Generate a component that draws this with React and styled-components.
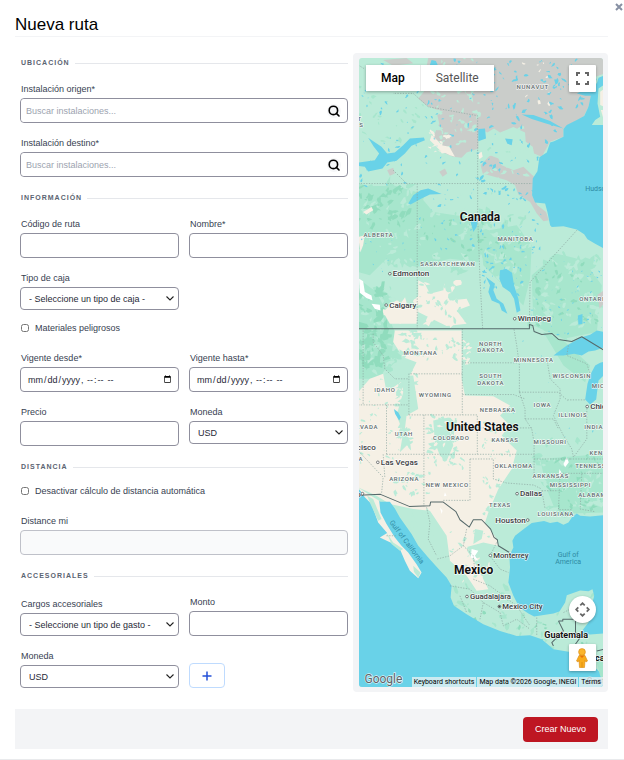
import { useState } from "react";
import styled, { createGlobalStyle } from "styled-components";

// small seeded blobs, so the terrain looks the same on every render
const scatter = (seed, count, [x, y, w, h], size) => {
  let s = seed;
  const rand = () => {
    s = (s * 16807) % 2147483647;
    return s / 2147483647;
  };
  let d = "";
  for (let i = 0; i < count; i++) {
    const cx = x + rand() * w;
    const cy = y + rand() * h;
    const r = size * (0.3 + rand() * 0.9);
    const tilt = rand() * Math.PI;
    for (let k = 0; k < 8; k++) {
      const a = (k * Math.PI) / 4;
      const q = r * (0.4 + rand());
      const px = Math.cos(a) * q;
      const py = Math.sin(a) * q * 0.5;
      const rx = cx + px * Math.cos(tilt) - py * Math.sin(tilt);
      const ry = cy + px * Math.sin(tilt) + py * Math.cos(tilt);
      d += `${k ? "L" : "M"}${rx.toFixed(1)} ${ry.toFixed(1)}`;
    }
    d += "Z";
  }
  return d;
};

const forest = [
  "M25 425L130 420L200 440L250 500L380 520L400 600L385 650L300 640L200 665L110 640L60 690L25 680Z",
  "M390 560L500 540L545 600L540 700L520 780L440 700L400 660Z",
  "M545 690L620 625L700 645L755 720L740 860L700 868L640 880L550 840Z",
  "M25 700L80 740L110 800L135 860L120 960L80 1000L25 1000Z",
  "M580 860L640 885L720 960L705 1010L640 960Z",
  "M570 1240L761 1225V1400L620 1405L590 1330Z",
  scatter(11, 60, [25, 410, 180, 250], 20),
  scatter(12, 50, [200, 500, 330, 180], 20),
  scatter(14, 50, [540, 620, 220, 260], 20),
  scatter(15, 50, [30, 720, 110, 280], 20),
  scatter(17, 30, [560, 1180, 200, 230], 17),
  scatter(18, 20, [380, 40, 160, 560], 8),
  scatter(20, 60, [310, 1600, 440, 230], 14),
  scatter(39, 30, [30, 100, 200, 200], 9),
].join("");

const clearings = [
  scatter(81, 60, [25, 430, 360, 220], 13),
  scatter(82, 40, [400, 560, 140, 180], 12),
  scatter(83, 50, [550, 650, 200, 200], 13),
  scatter(84, 30, [40, 740, 90, 240], 12),
  scatter(85, 30, [580, 1230, 180, 160], 13),
].join("");

const deepForest = [
  scatter(21, 40, [25, 420, 150, 140], 13),
  scatter(22, 60, [25, 720, 85, 240], 17),
  scatter(23, 30, [220, 520, 300, 140], 8),
  scatter(24, 30, [590, 1220, 170, 170], 9),
  scatter(25, 30, [560, 650, 180, 190], 9),
  scatter(26, 26, [320, 1640, 420, 160], 8),
].join("");

const lakes = [
  scatter(31, 90, [25, 45, 360, 380], 6),
  scatter(32, 90, [380, 45, 250, 420], 8),
  scatter(33, 36, [600, 45, 150, 150], 8),
  scatter(34, 60, [210, 430, 370, 190], 6),
  scatter(35, 40, [400, 600, 150, 150], 6),
  scatter(36, 50, [545, 640, 215, 230], 4),
  scatter(37, 20, [25, 560, 180, 120], 3),
  scatter(38, 12, [480, 880, 250, 300], 3),
].join("");

const cream = [
  scatter(41, 26, [215, 710, 110, 130], 18),
  scatter(42, 14, [110, 765, 90, 70], 17),
  scatter(43, 12, [330, 880, 30, 90], 10),
  scatter(44, 14, [240, 260, 60, 60], 9),
  scatter(45, 12, [340, 1440, 100, 180], 14),
  scatter(46, 12, [520, 50, 80, 130], 6),
].join("");

const rangeland = [
  scatter(50, 30, [205, 715, 150, 120], 10),
  scatter(51, 38, [140, 850, 60, 170], 13),
  scatter(52, 34, [145, 990, 45, 220], 13),
  scatter(53, 38, [235, 1110, 85, 130], 13),
  scatter(54, 26, [200, 870, 130, 70], 8),
  scatter(55, 32, [30, 1000, 120, 260], 6),
  scatter(56, 26, [130, 1270, 110, 80], 9),
  scatter(57, 34, [185, 1395, 60, 120], 15),
  scatter(58, 24, [400, 1130, 80, 110], 7),
  scatter(59, 20, [400, 1290, 50, 150], 8),
  scatter(60, 24, [300, 1450, 120, 170], 8),
  scatter(61, 14, [240, 1220, 100, 50], 8),
].join("");

// x, y, anchor, lines
const regions = [
  [41, 576, "start", ["ALBERTA"]],
  [548, 132, "middle", ["NUNAVUT"]],
  [496, 587, "middle", ["MANITOBA"]],
  [294, 661, "middle", ["SASKATCHEWAN"]],
  [687, 767, "start", ["ONTARIO"]],
  [212, 928, "middle", ["MONTANA"]],
  [422, 902, "middle", ["NORTH", "DAKOTA"]],
  [551, 951, "middle", ["MINNESOTA"]],
  [422, 998, "middle", ["SOUTH", "DAKOTA"]],
  [665, 999, "middle", ["WISCONSIN"]],
  [105, 1038, "middle", ["IDAHO"]],
  [256, 1053, "middle", ["WYOMING"]],
  [443, 1099, "middle", ["NEBRASKA"]],
  [577, 1084, "middle", ["IOWA"]],
  [668, 1113, "middle", ["ILLINOIS"]],
  [725, 1028, "start", ["MICHIGAN"]],
  [85, 1150, "end", ["NEVADA"]],
  [162, 1171, "middle", ["UTAH"]],
  [304, 1183, "middle", ["COLORADO"]],
  [465, 1188, "middle", ["KANSAS"]],
  [600, 1194, "middle", ["MISSOURI"]],
  [702, 1149, "start", ["INDIANA"]],
  [718, 1227, "start", ["KENTUCKY"]],
  [491, 1268, "middle", ["OKLAHOMA"]],
  [675, 1267, "start", ["TENNESSEE"]],
  [602, 1296, "middle", ["ARKANSAS"]],
  [163, 1307, "middle", ["ARIZONA"]],
  [292, 1324, "middle", ["NEW MEXICO"]],
  [661, 1325, "middle", ["MISSISSIPPI"]],
  [450, 1383, "middle", ["TEXAS"]],
  [684, 1355, "start", ["ALABAMA"]],
  [617, 1412, "middle", ["LOUISIANA"]],
  [36, 228, "end", ["T"]],
  [41, 247, "end", ["S"]],
  [40, 1246, "end", ["A"]],
];

const cities = [
  [120, 685, "Edmonton"],
  [109, 779, "Calgary"],
  [494, 820, "Winnipeg"],
  [711, 1083, "Chicago"],
  [84, 1250, "Las Vegas"],
  [501, 1344, "Dallas"],
  [421, 1529, "Monterrey", 23],
  [351, 1652, "Guadalajara", 23],
  [448, 1682, "Mexico City", 23],
];

const RouteMap = () => (
  <MapSvg viewBox="25 39 736 1884" preserveAspectRatio="xMidYMid slice" aria-hidden="true">
    <rect x="0" y="0" width="800" height="2000" fill="#bbebd8" />
    <path d={forest} fill="#a7e6cd" />
    <path d={clearings} fill="#bbebd8" />
    <path d={deepForest} fill="#90dcbd" />
    <path
      fill="#cacdca"
      d="M235 39H761V86L735 96L722 125L724 150L715 185L700 215L640 250V275L600 290L575 335L552 325L548 305L527 290L525 262L490 246L450 262L432 250L412 262L398 255L385 270V310L350 322L335 338L310 335L270 318L280 290L245 285L268 235L262 210L280 200L235 185L205 160L222 140L228 75ZM392 360L420 330L445 340L455 360L490 375L520 365L552 395L546 450L562 480L588 500L596 525L580 528L560 505L540 470L505 448L495 420L470 405L398 385ZM112 375L130 368L135 385L120 392ZM268 380L285 370L292 385L278 395ZM100 45L170 39L190 55L130 62ZM742 748L761 735V775L748 790Z"
    />
    <path d={scatter(71, 40, [240, 130, 145, 180], 12)} fill="#bbebd8" />
    <path d={scatter(73, 20, [250, 39, 180, 90], 12)} fill="#bbebd8" />
    <path d={scatter(72, 24, [390, 240, 150, 160], 10)} fill="#bbebd8" />
    <path
      fill="#f5f0e5"
      d="M205 705L225 715L240 745L280 735L300 765L350 760L360 780L320 795L350 835L290 842L205 800ZM100 800L130 770L205 790L200 835L120 835ZM135 855H335V1000L345 1050L430 1052L480 1080L450 1110L480 1140L455 1170L500 1215L485 1270L445 1330L415 1400L405 1430L440 1480L445 1500L400 1490L345 1505L380 1560L400 1600L415 1630L380 1635L350 1590L300 1545L290 1470L240 1395L190 1390L120 1375L80 1350L25 1325V1040L60 1000L100 985L110 1040L180 990L200 950L160 935L130 890ZM245 270L262 285L275 300L298 305L315 335L300 330L270 315L240 285ZM25 575L45 570L40 600L32 620ZM40 500L65 485L70 495L50 508ZM385 325L395 320L398 335L388 342Z"
    />
    <path d={cream} fill="#f5f0e5" />
    <path d={rangeland} fill="#bbebd8" />
    <path
      fill="#bbebd8"
      d="M155 990L190 990L205 1090L170 1110L165 1150L180 1190L150 1220L160 1160L140 1110L160 1040ZM250 1125L300 1115L318 1135L300 1160L310 1200L290 1245L270 1230L255 1190ZM185 1395L215 1400L235 1440L270 1500L300 1580L290 1590L235 1520ZM375 1450L400 1455L395 1480L370 1495Z"
    />
    <path d={scatter(62, 16, [240, 1110, 90, 130], 8)} fill="#f5f0e5" />
    <path
      fill="#ffffff"
      d="M28 700L40 708L45 740L65 750L68 765L50 758L30 742ZM65 775L90 778L92 795L75 790ZM365 1510L385 1515L375 1530L385 1545L362 1535ZM270 1385L278 1395L275 1405ZM650 1235L656 1250L645 1265L640 1255ZM628 1270L636 1285L625 1300ZM285 1340L290 1350L282 1352Z"
    />
    <path d={lakes} fill="#69d2e8" />

    <g fill="#69d2e8">
      {/* Hudson Bay */}
      <path d="M765 90L745 98L740 115L680 145L705 152L722 152L715 185L702 213L680 225L650 240L640 252V275L612 288L600 292L590 322L568 336L562 378L548 400L546 450L555 472L585 475L592 500L600 540L605 545L640 543L680 553L702 567L712 582L735 595L765 612Z" />
      {/* Great Slave, Athabasca and Winnipeg */}
      <path d="M55 278L95 305L112 325L135 322L160 300L180 280L222 277L225 285L185 302L165 325L140 347L112 352L98 370L55 379L45 365L25 362V352L75 345L88 325L72 305ZM175 475L190 450L212 435L235 430L275 446L240 448L215 460L182 478ZM450 675L468 670L486 682L492 720L505 760L511 795L500 802L492 760L480 740L458 725L448 700ZM408 695L435 715L430 735L440 760L460 775L472 805L455 795L448 775L425 765L415 740L420 720ZM515 208L550 210L600 228L640 250L590 236L545 222ZM385 252L405 250L408 280L385 288ZM465 280L488 282L485 300L472 296ZM245 45L258 48L270 75L262 85L240 60ZM683 810L697 806V835L685 838ZM362 530L385 515L380 545L370 560ZM132 1090L145 1100L153 1115L148 1125L136 1105Z" />
      {/* Superior and Michigan */}
      <path d="M610 930L650 900L692 876L720 868L740 855L765 860V905L735 915L715 918L695 930L672 925L640 930ZM705 1062L712 1015L722 985L735 960L750 952L765 948V985L745 1005L738 1062L720 1077Z" />
      {/* Gulf of Mexico and the Caribbean */}
      <path d="M765 1408L720 1412L690 1410L680 1403L665 1415L655 1430L640 1437L622 1428L600 1432L582 1426L545 1432L525 1447L495 1470L487 1485L490 1505L478 1530L480 1565L475 1610L490 1650L508 1685L535 1703L552 1712L610 1703L628 1697L645 1670L650 1648L690 1634L715 1636L727 1630L732 1650L722 1690L715 1730L690 1762L720 1766L765 1762Z" />
      {/* Pacific */}
      <path d="M20 1325L45 1345L92 1368L120 1368L135 1388L150 1415L185 1465L205 1500L235 1535L262 1565L290 1595L305 1620L302 1655L312 1680L350 1705L400 1735L450 1755L500 1770L540 1768L575 1780L610 1810L660 1818L700 1840L740 1870L765 1895V1960H20Z" />
    </g>
    {/* Baja California */}
    <path
      fill="#f5f0e5"
      d="M25 1325L55 1345L88 1365L92 1400L110 1435L135 1475L155 1500L175 1520L200 1555L215 1580L205 1597L180 1575L165 1545L150 1510L125 1492L90 1475L112 1462L85 1430L65 1375L45 1355Z"
    />
    <path fill="#bbebd8" d="M52 1350L70 1360L95 1420L85 1425L62 1375ZM110 1460L130 1490L160 1510L150 1515L125 1495ZM190 1560L212 1580L205 1595L192 1578ZM745 130L761 120V240L725 240L735 225L750 215L742 175Z" />
    <path fill="#f5f0e5" d="M750 140L761 132V185L750 180ZM752 195H761V225Z" />
    <path d="M740 1848L761 1835V1905L750 1890Z" fill="#a5e5cb" />

    <g fill="none" stroke="#8ba59f" strokeWidth="2" strokeDasharray="4 4">
      <path d="M25 415H546M202 415V850M383 510V212L235 185L190 145H130M383 510L390 700L398 850M680 555L540 710L538 840M25 60L45 72M130 375L175 420" />
      <path d="M337 850V1108M337 952H505M492 852L500 900L508 960V1040M337 1047H490L525 1060M177 1108V985H337M177 1108H382V1226M222 1108V1382M110 1078V1226M110 1226H552M25 1078H177M40 855V1078M70 865V890L100 930L105 970L135 1000L177 1000M382 1147H545M360 1240V1364H280M360 1240H430V1300L470 1312L550 1318L575 1330M508 1040H625L652 1065M508 1040L525 1090V1120L545 1150L552 1190V1300M525 1120H610L625 1150M592 950L600 1000L630 1030V1060L610 1110L640 1170L665 1210L670 1235M552 1240H660M655 900L650 930L710 955L720 985M652 1063H705M710 1080V1180L670 1235M660 1240H761M630 1283H761M630 1283L625 1392H665M575 1335H625M575 1335L585 1390M695 1285L690 1390L735 1398M25 1215L100 1295L95 1345M100 1226L105 1295" />
      <path d="M230 1385L240 1430L235 1480L260 1530M350 1450L340 1500L300 1530L260 1540M340 1500L370 1530L375 1580M440 1490L420 1530L450 1570L475 1580M300 1620L360 1630L400 1670L450 1700M370 1600L420 1620L460 1650L500 1680M330 1650L350 1700M400 1670L390 1720M450 1700L460 1740L500 1720L540 1750M500 1680L540 1740M110 1470H140M640 1700L680 1680M560 1715L560 1770" />
    </g>
    <g fill="none" stroke="#56696a" strokeWidth="3" strokeLinejoin="round">
      <path d="M25 850H538V837L548 840L552 858L575 867L605 864L625 882L665 888L695 874L761 914" />
      <path d="M25 1349L92 1346L178 1382L240 1380L242 1369H280L318 1398L330 1422L358 1444L370 1422H395L422 1450L432 1475L442 1482L445 1500L478 1520" />
      <path d="M625 1725H638V1720H676V1760M625 1725L640 1755L605 1790L610 1800M676 1760L690 1775L672 1800L690 1815M740 1815L761 1810" />
    </g>

    {regions.map(([x, y, anchor, lines]) => (
      <RegionName key={lines[0]} textAnchor={anchor}>
        {lines.map((line, i) => (
          <tspan key={line} x={x} y={y + i * 19}>
            {line}
          </tspan>
        ))}
      </RegionName>
    ))}
    {cities.map(([x, y, name, size = 24]) => (
      <g key={name}>
        <circle cx={x} cy={y} r="4" fill="#fff" stroke="#3c4043" strokeWidth="2" />
        <CityName x={x + 9} y={y + 8} fontSize={size}>
          {name}
        </CityName>
      </g>
    ))}
    <circle cx="448" cy="1682" r="3" fill="#3c4043" />
    <circle cx="533" cy="1423" r="4" fill="#fff" stroke="#3c4043" strokeWidth="2" />
    <CityName x="527" y="1432" fontSize="24" textAnchor="end">
      Houston
    </CityName>
    <circle cx="38" cy="1344" r="4" fill="#fff" stroke="#3c4043" strokeWidth="2" />
    <CityName x="33" y="1353" fontSize="24" textAnchor="end">
      San Diego
    </CityName>
    <CityName x="78" y="1212" fontSize="24" textAnchor="end">
      San Francisco
    </CityName>
    <CountryName x="390" y="527">Canada</CountryName>
    <CountryName x="397" y="1157">United States</CountryName>
    <CountryName x="371" y="1584">Mexico</CountryName>
    <CountryName x="648" y="1775" $small>
      Guatemala
    </CountryName>
    <CountryName x="770" y="1846" $small>
      Nicaragua
    </CountryName>
    <CountryName x="774" y="1914" $small $faded>
      Costa Rica
    </CountryName>
    <WaterName x="705" y="437">Hudson Bay</WaterName>
    <WaterName textAnchor="middle">
      <tspan x="654" y="1535">Gulf of</tspan>
      <tspan x="654" y="1555">America</tspan>
    </WaterName>
    <WaterName transform="translate(118 1430) rotate(53)">Gulf of California</WaterName>
    <GoogleMark x="44" y="1910">Google</GoogleMark>
  </MapSvg>
);

const Field = ({ id, label, children }) => (
  <FieldBox>
    <Label htmlFor={id}>{label}</Label>
    {children}
  </FieldBox>
);

const App = () => {
  const [mapType, setMapType] = useState("map");

  return (
    <Modal>
      <GlobalStyle />
      <CloseButton type="button" aria-label="Cerrar">
        <svg width="8" height="8" viewBox="0 0 8 8" stroke="#8790a3" strokeWidth="2">
          <path d="M1 1L7 7M7 1L1 7" />
        </svg>
      </CloseButton>
      <Title>Nueva ruta</Title>

      <Content>
        <Form id="route-form" onSubmit={(e) => e.preventDefault()}>
          <SectionTitle>Ubicación</SectionTitle>
          {[
            ["origin", "Instalación origen*"],
            ["destination", "Instalación destino*"],
          ].map(([id, label]) => (
            <Field key={id} id={id} label={label}>
              <SearchBox>
                <SearchInput id={id} placeholder="Buscar instalaciones..." />
                <SearchButton type="button" aria-label="Buscar">
                  <svg width="12" height="12" viewBox="0 0 12 12" fill="none" stroke="#000" strokeWidth="1.6">
                    <circle cx="5.4" cy="5.4" r="4.2" />
                    <path d="M8.4 8.4L11 11" strokeLinecap="round" />
                  </svg>
                </SearchButton>
              </SearchBox>
            </Field>
          ))}

          <SectionTitle>Información</SectionTitle>
          <Row>
            <Field id="code" label="Código de ruta">
              <Input id="code" />
            </Field>
            <Field id="name" label="Nombre*">
              <Input id="name" />
            </Field>
          </Row>
          <Row>
            <Field id="box-type" label="Tipo de caja">
              <Select id="box-type">
                <option>- Seleccione un tipo de caja -</option>
              </Select>
            </Field>
          </Row>
          <CheckLabel>
            <Checkbox type="checkbox" />
            Materiales peligrosos
          </CheckLabel>
          <Row>
            <Field id="valid-from" label="Vigente desde*">
              <Input id="valid-from" type="datetime-local" />
            </Field>
            <Field id="valid-to" label="Vigente hasta*">
              <Input id="valid-to" type="datetime-local" />
            </Field>
          </Row>
          <Row>
            <Field id="price" label="Precio">
              <Input id="price" />
            </Field>
            <Field id="currency" label="Moneda">
              <Select id="currency">
                <option>USD</option>
                <option>MXN</option>
              </Select>
            </Field>
          </Row>

          <SectionTitle>Distancia</SectionTitle>
          <CheckLabel>
            <Checkbox type="checkbox" />
            Desactivar cálculo de distancia automática
          </CheckLabel>
          <Field id="distance" label="Distance mi">
            <Input id="distance" disabled />
          </Field>

          <SectionTitle>Accesoriales</SectionTitle>
          <Row $align="end">
            <Field id="charge" label="Cargos accesoriales">
              <Select id="charge">
                <option>- Seleccione un tipo de gasto -</option>
              </Select>
            </Field>
            <Field id="amount" label="Monto">
              <Input id="amount" />
            </Field>
          </Row>
          <Row $align="end">
            <Field id="charge-currency" label="Moneda">
              <Select id="charge-currency">
                <option>USD</option>
                <option>MXN</option>
              </Select>
            </Field>
            <AddButton type="button" aria-label="Agregar cargo">
              <svg width="10" height="10" viewBox="0 0 10 10" stroke="#2450d8" strokeWidth="1.5">
                <path d="M5 0.5V9.5M0.5 5H9.5" />
              </svg>
            </AddButton>
          </Row>
        </Form>

        <MapPanel>
          <MapCanvas>
            <RouteMap />
            <MapTypes>
              <MapType type="button" $active={mapType === "map"} onClick={() => setMapType("map")}>
                Map
              </MapType>
              <MapType
                type="button"
                $active={mapType === "satellite"}
                onClick={() => setMapType("satellite")}
              >
                Satellite
              </MapType>
            </MapTypes>
            <FullscreenButton type="button" aria-label="Toggle fullscreen view">
              <svg width="13" height="13" viewBox="0 0 13 13" fill="none" stroke="#666" strokeWidth="2">
                <path d="M1 4V1H4M9 1H12V4M12 9V12H9M4 12H1V9" />
              </svg>
            </FullscreenButton>
            <MapTools>
              <MapButton type="button" aria-label="Map camera controls" $round>
                <svg width="15" height="15" viewBox="0 0 15 15" fill="none" stroke="#666" strokeWidth="1.8">
                  <path d="M5.3 3.3L7.5 1.2L9.7 3.3M5.3 11.7L7.5 13.8L9.7 11.7M3.3 5.3L1.2 7.5L3.3 9.7M11.7 5.3L13.8 7.5L11.7 9.7" />
                </svg>
              </MapButton>
              <MapButton type="button" aria-label="Street View Pegman">
                <svg width="12" height="20" viewBox="0 0 12 20">
                  <path
                    d="M3 7.5H9L11.5 13L10 14L9 12.5L8.5 19.5H3.5L3 12.5L2 14L0.5 13Z"
                    fill="#f9ab1c"
                    stroke="#d98a12"
                    strokeWidth="0.6"
                  />
                  <path d="M6 14V19.5" stroke="#d98a12" strokeWidth="0.8" />
                  <path d="M3.5 7.5H8.5L6 10Z" fill="#e8710a" />
                  <circle cx="6" cy="4" r="3.4" fill="#fbb52d" stroke="#d98a12" strokeWidth="0.6" />
                </svg>
              </MapButton>
            </MapTools>
            <Attribution>
              <AttributionButton type="button">Keyboard shortcuts</AttributionButton>
              <AttributionText>Map data ©2026 Google, INEGI</AttributionText>
              <AttributionLink href="#terms">Terms</AttributionLink>
            </Attribution>
          </MapCanvas>
        </MapPanel>
      </Content>

      <Footer>
        <SubmitButton type="submit" form="route-form">
          Crear Nuevo
        </SubmitButton>
      </Footer>
    </Modal>
  );
};

export default App;

const GlobalStyle = createGlobalStyle`
  * {
    box-sizing: border-box;
  }

  body {
    margin: 0;
    background-color: #ffffff;
    font-family: "Liberation Sans", Arial, sans-serif;
    font-size: 9px;
    color: #374151;
  }

  button, input, select {
    margin: 0;
    font-family: inherit;
    font-size: 9px;
  }

  button {
    padding: 0;
    cursor: pointer;
  }
`;

const Modal = styled.main`
  position: relative;
  padding: 15px 16px 10px 15px;
  border-bottom: 1px solid #e9eaec;
`;

const CloseButton = styled.button`
  position: absolute;
  top: 3px;
  right: 1px;
  display: flex;
  border: 0;
  background: none;
`;

const Title = styled.h1`
  margin: 0 0 16px;
  padding-bottom: 1px;
  border-bottom: 1px solid #f3f4f6;
  font-size: 17px;
  line-height: 20px;
  font-weight: 400;
  color: #000000;
`;

const Content = styled.div`
  display: grid;
  grid-template-columns: 57fr 43fr;
`;

const Form = styled.form`
  display: flex;
  flex-direction: column;
  gap: 15px;
  min-width: 0;
  padding: 4px 5px;
`;

const SectionTitle = styled.h2`
  display: flex;
  align-items: center;
  gap: 5px;
  margin: 0;
  padding-left: 1px;
  font-size: 7px;
  line-height: 12px;
  letter-spacing: 1px;
  text-transform: uppercase;
  color: #5b6472;

  &::after {
    content: "";
    flex: 1;
    height: 1px;
    background-color: #e5e7eb;
  }
`;

const Row = styled.div`
  display: grid;
  grid-template-columns: 1fr 1fr;
  column-gap: 10px;
  align-items: ${({ $align }) => $align || "start"};
`;

const FieldBox = styled.div`
  display: flex;
  flex-direction: column;
  gap: 4px;
  min-width: 0;
`;

const Label = styled.label`
  padding-left: 1px;
  line-height: 10px;
`;

const Input = styled.input`
  width: 100%;
  height: 25px;
  padding: 0 6px;
  border: 1px solid #8f8f9d;
  border-radius: 4px;
  background-color: #ffffff;
  color: #1f2937;

  &::placeholder {
    color: #9ca3af;
  }

  &::-webkit-calendar-picker-indicator {
    width: 9px;
    height: 9px;
    padding: 0;
  }

  &:disabled {
    border-color: #bfc1c9;
    background-color: #f9fafb;
  }
`;

const SearchBox = styled.div`
  display: flex;
  align-items: center;
  height: 25px;
  padding-right: 6px;
  border: 1px solid #8f8f9d;
  border-radius: 4px;
`;

const SearchInput = styled(Input)`
  flex: 1;
  height: 100%;
  padding: 0 5px;
  border: 0;
`;

const SearchButton = styled.button`
  display: flex;
  padding: 1px;
  border: 0;
  border-radius: 50%;
  background-color: #f6f7f9;
`;

const Select = styled.select`
  appearance: none;
  width: 100%;
  height: 23px;
  padding: 0 20px 0 8px;
  border: 1px solid #8f8f9d;
  border-radius: 4px;
  background: #ffffff
    url("data:image/svg+xml,%3Csvg xmlns='http://www.w3.org/2000/svg' width='8' height='5' fill='none' stroke='%23222' stroke-width='1.1'%3E%3Cpath d='M0.5 0.5L4 4L7.5 0.5'/%3E%3C/svg%3E")
    no-repeat right 4px center;
  color: #1f2937;
`;

const CheckLabel = styled.label`
  display: flex;
  align-items: center;
  gap: 6px;
  margin-top: -3px;
  padding: 0 0 4px 1px;
  line-height: 12px;
`;

const Checkbox = styled.input`
  width: 8px;
  height: 8px;
  margin: 0;
`;

const AddButton = styled.button`
  display: flex;
  align-items: center;
  justify-content: center;
  width: 36px;
  height: 25px;
  border: 1px solid #bfdbfe;
  border-radius: 4px;
  background-color: #ffffff;
`;

const MapPanel = styled.section`
  display: flex;
  padding: 5px 5px 5px 6px;
  border-radius: 4px;
  background-color: #f3f4f6;
`;

const MapCanvas = styled.div`
  position: relative;
  flex: 1;
  overflow: hidden;
  border-radius: 3px;
  font-family: Roboto, sans-serif;
`;

const MapSvg = styled.svg`
  position: absolute;
  inset: 0;
  width: 100%;
  height: 100%;
`;

const MapText = styled.text`
  fill: #3c4043;
  stroke: rgba(255, 255, 255, 0.8);
  stroke-width: 4px;
  stroke-linejoin: round;
  paint-order: stroke;
`;

const RegionName = styled(MapText)`
  font-size: 18px;
  font-weight: 500;
  letter-spacing: 2px;
  fill: #5f6b6d;
`;

const CityName = styled(MapText)`
  font-weight: 500;
`;

const CountryName = styled(MapText)`
  font-size: ${({ $small }) => ($small ? 27 : 36)}px;
  font-weight: 700;
  text-anchor: middle;
  fill: #111111;
  opacity: ${({ $faded }) => ($faded ? 0.5 : 1)};
`;

const WaterName = styled.text`
  font-size: 21px;
  fill: #2f8ba3;
`;

const GoogleMark = styled(MapText)`
  font-size: 36px;
  fill: #5f6368;
`;

const MapButton = styled.button`
  display: flex;
  align-items: center;
  justify-content: center;
  width: 27px;
  height: 27px;
  border: 0;
  border-radius: ${({ $round }) => ($round ? "50%" : "1px")};
  background-color: #ffffff;
  box-shadow: 0 1px 3px rgba(0, 0, 0, 0.3);
`;

const MapTypes = styled.div`
  position: absolute;
  top: 7px;
  left: 7px;
  display: flex;
  box-shadow: 0 1px 3px rgba(0, 0, 0, 0.3);
`;

const MapType = styled.button`
  height: 26px;
  padding: 0 15px;
  border: 0;
  background-color: #ffffff;
  font-family: inherit;
  font-size: 12px;
  font-weight: ${({ $active }) => ($active ? 500 : 400)};
  color: ${({ $active }) => ($active ? "#000000" : "#565656")};

  & + & {
    border-left: 1px solid #ececec;
  }
`;

const FullscreenButton = styled(MapButton)`
  position: absolute;
  top: 7px;
  right: 7px;
`;

const MapTools = styled.div`
  position: absolute;
  right: 7px;
  bottom: 16px;
  display: flex;
  flex-direction: column;
  gap: 21px;
`;

const Attribution = styled.div`
  position: absolute;
  right: 0;
  bottom: 0;
  display: flex;
  gap: 1px;
  white-space: nowrap;
`;

const AttributionText = styled.span`
  padding: 0 2px;
  background-color: rgba(245, 245, 245, 0.7);
  font-size: 7px;
  line-height: 10px;
  color: #000000;
`;

const AttributionButton = styled(AttributionText).attrs({ as: "button" })`
  border: 0;
  font-family: inherit;
`;

const AttributionLink = styled(AttributionText).attrs({ as: "a" })`
  text-decoration: none;
`;

const Footer = styled.footer`
  display: flex;
  align-items: center;
  justify-content: flex-end;
  height: 40px;
  margin-top: 17px;
  padding: 0 10px;
  background-color: #f3f4f6;
`;

const SubmitButton = styled.button`
  height: 25px;
  padding: 0 12px;
  border: 0;
  border-radius: 4px;
  background-color: #be1622;
  color: #ffffff;
`;
